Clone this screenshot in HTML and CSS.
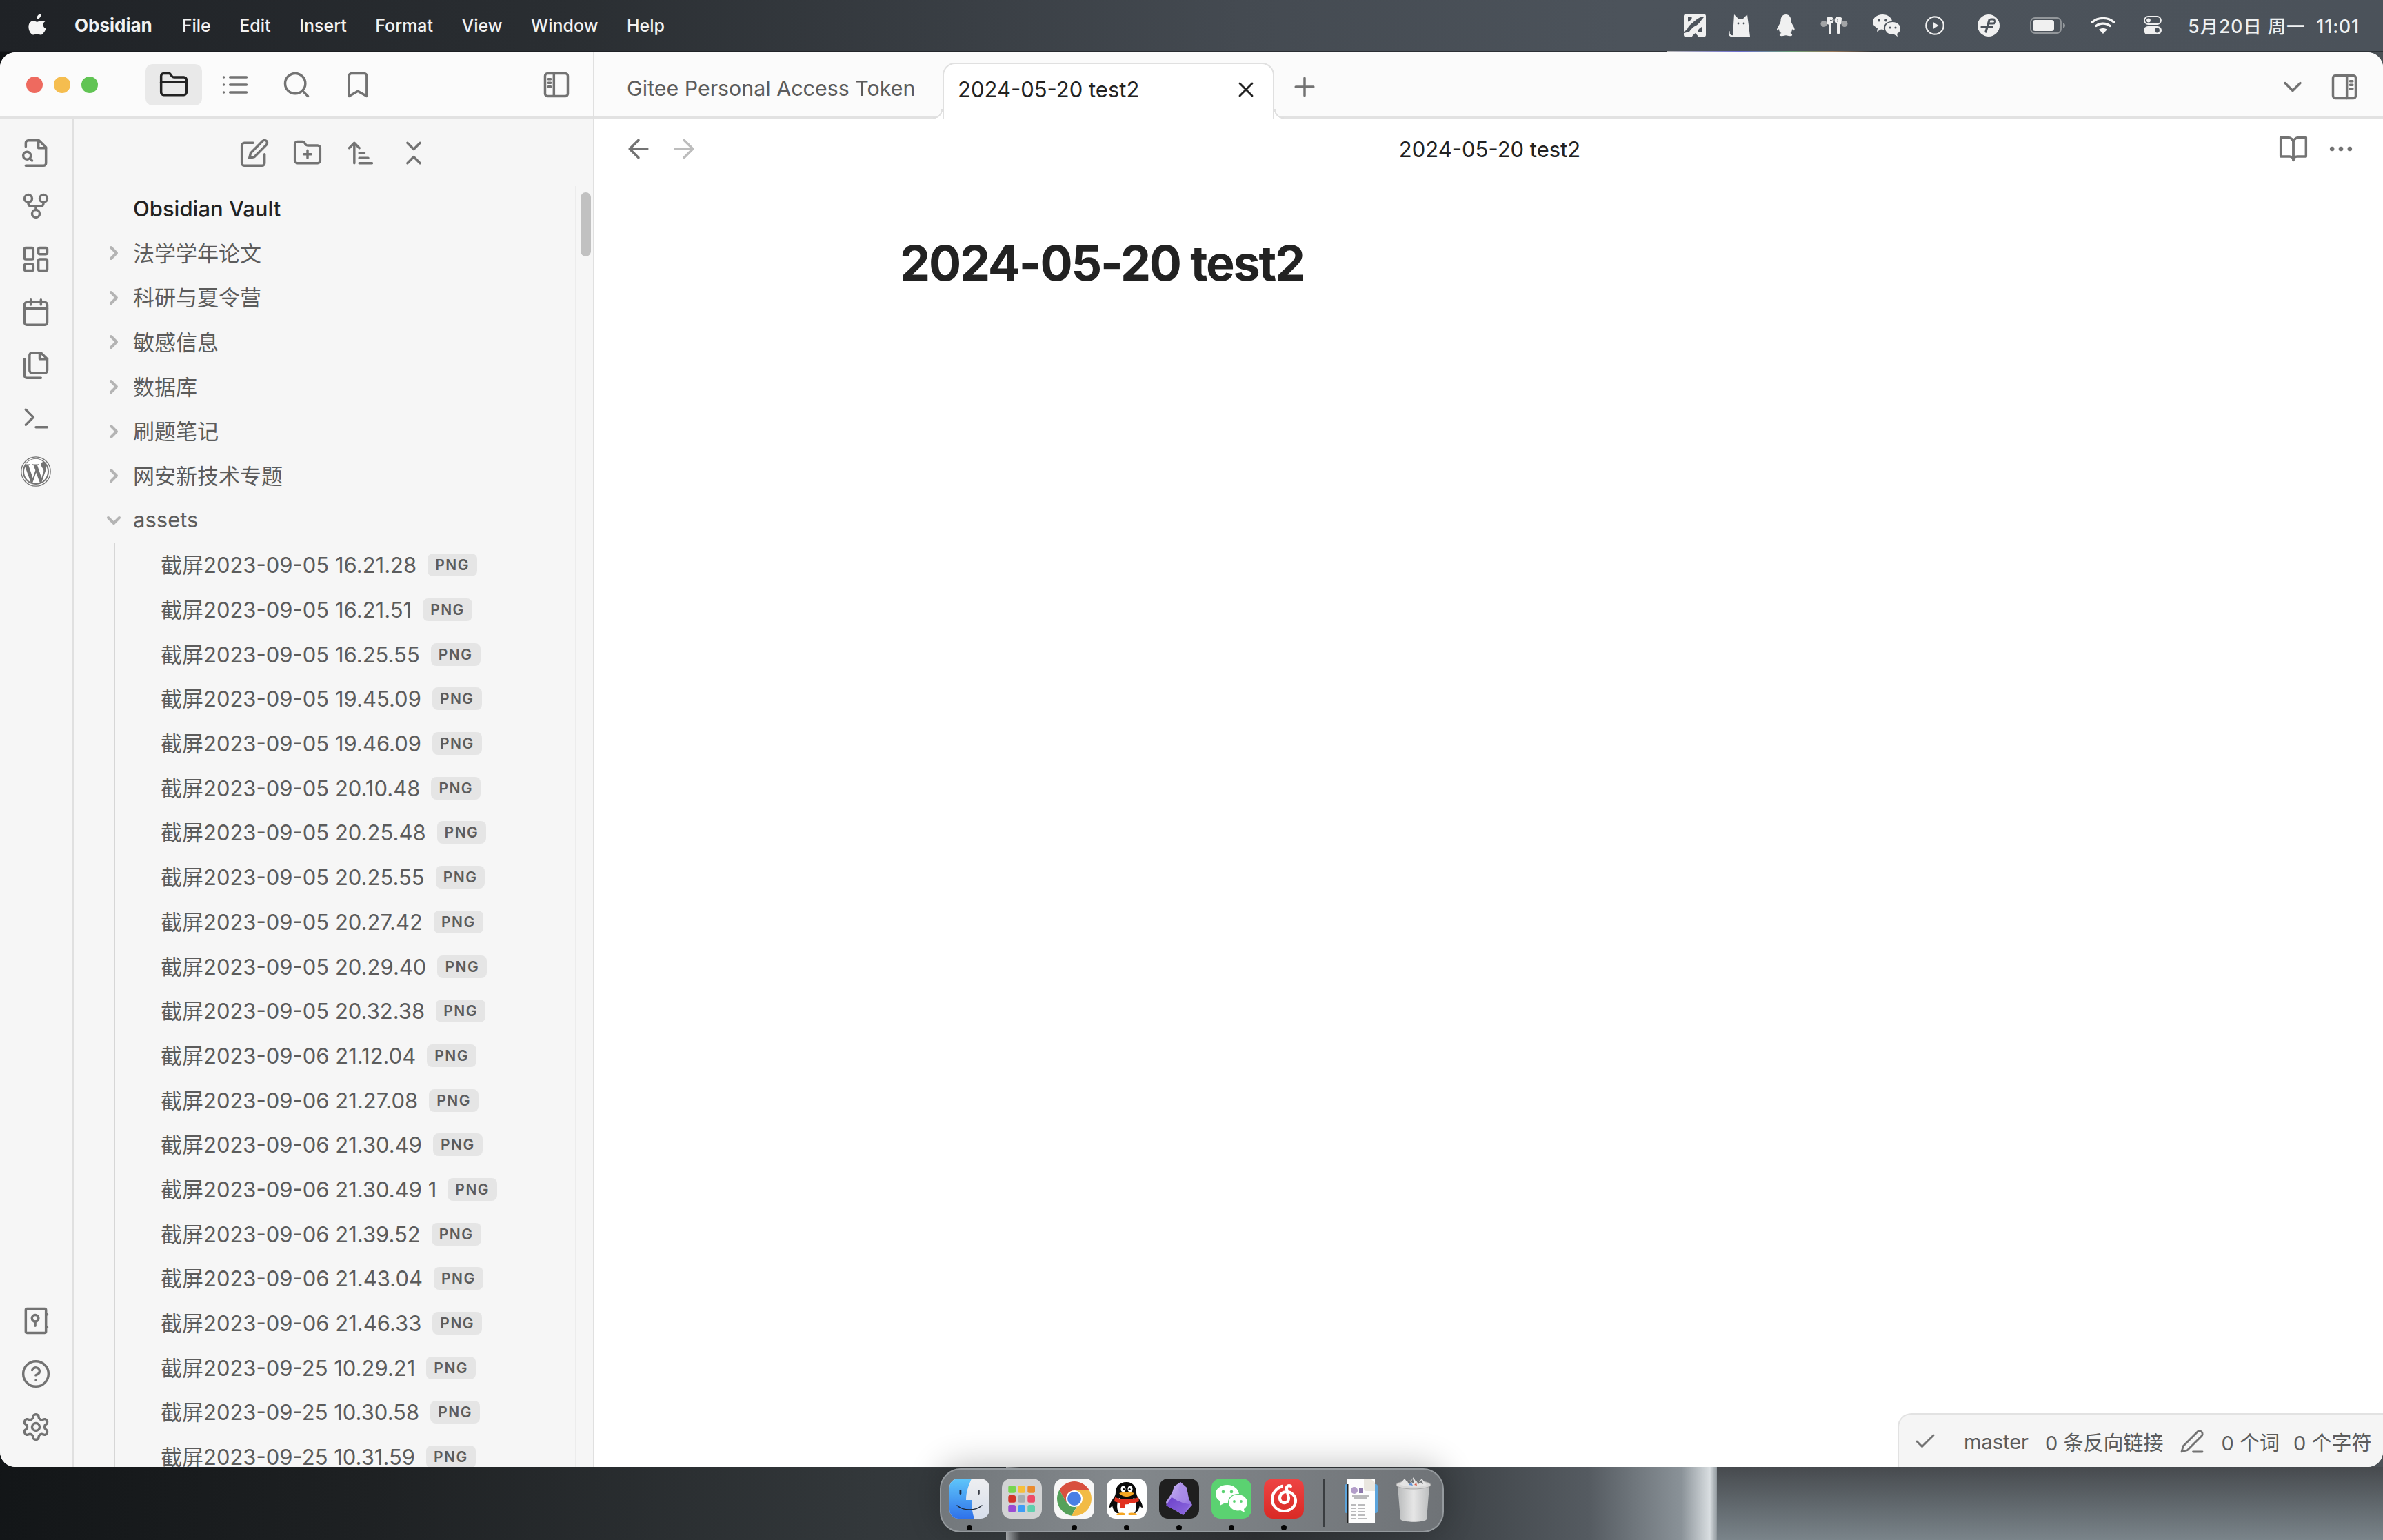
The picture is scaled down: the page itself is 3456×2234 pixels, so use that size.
FILE: index.html
```html
<!DOCTYPE html>
<html lang="zh-CN">
<head>
<meta charset="utf-8">
<title>Obsidian</title>
<link rel="stylesheet" href="styles.css">
</head>
<body>
<svg class="defs" width="0" height="0" aria-hidden="true">
  <defs>
    <linearGradient id="finderBlue" x1="0" y1="0" x2="0" y2="1"><stop offset="0" stop-color="#5fc6fa"/><stop offset="1" stop-color="#2f72ea"/></linearGradient>
    <linearGradient id="finderLight" x1="0" y1="0" x2="0" y2="1"><stop offset="0" stop-color="#eeeff1"/><stop offset="1" stop-color="#d6deeb"/></linearGradient>
    <linearGradient id="gemTop" x1="0" y1="0" x2="1" y2="1"><stop offset="0" stop-color="#c9b6f2"/><stop offset="1" stop-color="#8a65de"/></linearGradient>
    <linearGradient id="gemLow" x1="0" y1="0" x2="1" y2="1"><stop offset="0" stop-color="#6b3fc9"/><stop offset="1" stop-color="#8f6ce0"/></linearGradient>
    <linearGradient id="neteaseBg" x1="0" y1="0" x2="0" y2="1"><stop offset="0" stop-color="#ee4444"/><stop offset="1" stop-color="#d92a25"/></linearGradient>
    <linearGradient id="trashBody" x1="0" y1="0" x2="1" y2="0"><stop offset="0" stop-color="#b9bbbc"/><stop offset=".5" stop-color="#e6e6e6"/><stop offset="1" stop-color="#bcbebf"/></linearGradient>
  </defs>
</svg>
<div class="screen">
  <header class="menubar">
    <nav class="menu-left">
      <svg class="apple" viewBox="0 0 26 31" width="27" height="31"><path d="M18.2 0c.2 2-.6 3.900-1.700 5.300-1.200 1.400-3 2.500-4.900 2.300-.2-1.900.7-3.900 1.700-5.100C14.500 1.100 16.500.1 18.200 0zM24.300 10.700c-1.800 1.100-3.200 2.800-3.200 5.200 0 2.900 1.900 4.600 4 5.500-.4 1.500-1.300 3.200-2.400 4.900-1.500 2.200-3 4.300-5.200 4.300-2.200 0-2.900-1.300-5.400-1.300-2.500 0-3.300 1.300-5.300 1.300-2.200 0-3.800-2.400-5.200-4.600C-.1 22.400-.9 17.600.9 14.100c1.200-2.300 3.700-3.800 6.100-3.800 2.200 0 3.700 1.400 5.300 1.400 1.600 0 2.800-1.400 5.500-1.400 2 0 4.900.4 6.500.4z" fill="#f5f5f5"/></svg>
      <span class="menu-app">Obsidian</span>
      <span class="menu-item">File</span>
      <span class="menu-item">Edit</span>
      <span class="menu-item">Insert</span>
      <span class="menu-item">Format</span>
      <span class="menu-item">View</span>
      <span class="menu-item">Window</span>
      <span class="menu-item">Help</span>
    </nav>
    <div class="menu-right">
      <div class="tray">
        <svg viewBox="0 0 32 32" width="32" height="32"><rect width="32" height="32" rx="2" fill="#f0f0f0"/><path d="M6 4c3 0 5 0 6 .5-1 3-3 5-6 6zM29 3v1c-3 3-6 9-11 12-5 2-8 6-10 9l-8 2v-2c3-2 5-3 6-6 2-4 5-5 9-9 4-3 7-6 14-7zM26 18v8h-6c0-4 3-6 6-8zM17 27c1 2 3 3 4 5h-9c1-2 3-4 5-5z" fill="#4c535b"/></svg>
        <svg viewBox="0 0 36 34" width="36" height="34"><path d="M9 1l6 6h7l6-6 1 8c1 7 2 16 3 24H9C7 34 2 33.500 1 30c-.5-2 .5-4 2-5 0 2-1 3 .5 5 1 1 2.500 1.500 3.500 1 .6-7 1.400-21 2-30z" fill="#f0f0f0"/><circle cx="15" cy="14" r="1.400" fill="#4c535b"/><circle cx="23" cy="14" r="1.400" fill="#4c535b"/></svg>
        <svg viewBox="0 0 26 32" width="26" height="32"><path d="M13 0c5 0 7.500 4 7.500 9 0 3 2 5 3.500 8 1.500 3 2 5 1.500 6-1 .5-2.500-.5-3.500-2 0 3-1 5-2.500 6 2 .6 3 2 2.500 3.500-2 1.500-5 .5-7.500 0l-1.500-.2-1.500.2c-2.500.5-5.500 1.500-7.500 0-.5-1.500.5-2.900 2.500-3.500C4 26 3 24 3 21c-1 1.500-2.500 2.500-3.500 2C-.5 22 .5 20 2 17c1.500-3 3.500-5 3.500-8C5.500 4 8 0 13 0z" fill="#f0f0f0"/></svg>
        <svg viewBox="0 0 40 26" width="40" height="26"><path d="M9 2c3-2 8-2 10 1 1 3 0 7-3 7v14a1.800 1.800 0 0 1-4 0V11.500c-1 0-2-.5-2.500-1.500z" fill="#f0f0f0"/><path d="M31 2c-3-2-8-2-10 1-1 3 0 7 3 7v14a1.800 1.800 0 0 0 4 0V11.500c1 0 2-.5 2.500-1.500z" fill="#f0f0f0"/><circle cx="5" cy="10.500" r="4.500" fill="#a2a4a6"/><circle cx="35" cy="10.500" r="4.500" fill="#a2a4a6"/><path d="M14 5l2 1.500 1.500-2M24 7l2-.5-1.500-2" stroke="#4c535b" stroke-width="1" fill="none"/></svg>
        <svg viewBox="0 0 40 32" width="40" height="32"><path d="M14 0c8 0 14 5 14 10-8-.5-13 5-12 12-1 0-2.500 0-4-.4L6 25l1-5C3 18 0 15 0 11 0 5 6 0 14 0z" fill="#f0f0f0"/><circle cx="9" cy="8.500" r="1.900" fill="#4c535b"/><circle cx="19" cy="8.500" r="1.900" fill="#4c535b"/><path d="M29 11c6 0 11 4 11 9s-3 7-5 8l1 4-5-3c-7 .5-13-3-13-9s5-9 11-9z" fill="#f0f0f0"/><circle cx="25" cy="19" r="1.600" fill="#4c535b"/><circle cx="33" cy="19" r="1.600" fill="#4c535b"/></svg>
        <svg viewBox="0 0 28 28" width="28" height="28"><circle cx="14" cy="14" r="12.700" fill="none" stroke="#f0f0f0" stroke-width="2.200"/><path d="M11 8.500l8.500 5.500-8.500 5.500z" fill="#f0f0f0"/></svg>
        <svg viewBox="0 0 32 32" width="32" height="32"><circle cx="16" cy="16" r="16" fill="#f0f0f0"/><path d="M19 7h3.500c4 0 4 6 0 6H16" stroke="#4c535b" stroke-width="3" fill="none" stroke-linecap="round"/><path d="M6 18h15M17 8l-5 17" stroke="#4c535b" stroke-width="3.200" stroke-linecap="round"/></svg>
        <svg viewBox="0 0 51 24" width="51" height="24"><rect x="1" y="1" width="44" height="22" rx="6" fill="none" stroke="#93979b" stroke-width="1.800"/><rect x="4" y="4" width="31" height="16" rx="3.500" fill="#f0f0f0"/><path d="M48 8c2 1 3 2.500 3 4s-1 3-3 4z" fill="#93979b"/></svg>
        <svg viewBox="0 0 34 25" width="34" height="25"><path d="M1.500 8C9.500.5 24.500.5 32.500 8" fill="none" stroke="#f5f5f5" stroke-width="3.400" stroke-linecap="round"/><path d="M7 13.500c5.500-4.500 14.500-4.500 20 0" fill="none" stroke="#f5f5f5" stroke-width="3.400" stroke-linecap="round"/><path d="M17 25l-6-6.200c3.500-2.500 8.500-2.500 12 0z" fill="#f5f5f5"/></svg>
        <svg viewBox="0 0 26 27" width="26" height="27"><rect x="1" y="1" width="24" height="11" rx="5.500" fill="none" stroke="#f0f0f0" stroke-width="1.800"/><circle cx="7" cy="6.500" r="2.900" fill="#f0f0f0"/><rect y="15" width="26" height="12" rx="6" fill="#f0f0f0"/><circle cx="19.500" cy="21" r="3.400" fill="#4c535b"/></svg>
      </div>
      <span class="clock">5月20日 周一&nbsp;&nbsp;11:01</span>
    </div>
    <span class="menu-glint"></span>
  </header>

  <div class="window">
    <section class="left">
      <div class="left-top">
        <div class="lights"><i class="light red"></i><i class="light amber"></i><i class="light green"></i></div>
        <div class="panes">
          <span class="pane active"><svg class="ic dark" viewBox="0 0 24 24"><path d="M20 20a2 2 0 0 0 2-2V8a2 2 0 0 0-2-2h-7.900a2 2 0 0 1-1.690-.9L9.600 3.900A2 2 0 0 0 7.930 3H4a2 2 0 0 0-2 2v13a2 2 0 0 0 2 2Z"/><path d="M2 10h20"/></svg></span>
          <span class="pane"><svg class="ic" viewBox="0 0 24 24"><path d="M3 12h.01M3 18h.01M3 6h.01M8 12h13M8 18h13M8 6h13"/></svg></span>
          <span class="pane"><svg class="ic" viewBox="0 0 24 24"><circle cx="11" cy="11" r="8"/><path d="m21 21-4.300-4.300"/></svg></span>
          <span class="pane"><svg class="ic" viewBox="0 0 24 24"><path d="m19 21-7-4-7 4V5a2 2 0 0 1 2-2h10a2 2 0 0 1 2 2v16z"/></svg></span>
        </div>
        <svg class="ic toggle-left" viewBox="0 0 24 24"><rect x="3" y="3" width="18" height="18" rx="2"/><path d="M10 3v18M5.500 7.500h2M5.500 10.500h2M5.500 13.500h2"/></svg>
      </div>
      <div class="left-body">
        <aside class="ribbon">
          <div class="ribbon-group">
            <svg class="ic" viewBox="0 0 24 24"><path d="M4 22h14a2 2 0 0 0 2-2V7.500L14.500 2H6a2 2 0 0 0-2 2v3"/><path d="M14 2v6h6"/><circle cx="5" cy="14" r="3"/><path d="m9 18-1.500-1.500"/></svg>
            <svg class="ic" viewBox="0 0 24 24"><circle cx="12" cy="18" r="3"/><circle cx="6" cy="6" r="3"/><circle cx="18" cy="6" r="3"/><path d="M18 9v1a2 2 0 0 1-2 2H8a2 2 0 0 1-2-2V9M12 12v3"/></svg>
            <svg class="ic" viewBox="0 0 24 24"><rect x="3" y="3" width="7" height="9" rx="1"/><rect x="14" y="3" width="7" height="5" rx="1"/><rect x="14" y="12" width="7" height="9" rx="1"/><rect x="3" y="16" width="7" height="5" rx="1"/></svg>
            <svg class="ic" viewBox="0 0 24 24"><rect x="3" y="4" width="18" height="18" rx="2"/><path d="M16 2v4M8 2v4M3 9h18"/></svg>
            <svg class="ic" viewBox="0 0 24 24"><path d="M9 2h7l5 5v9a2 2 0 0 1-2 2H9a2 2 0 0 1-2-2V4a2 2 0 0 1 2-2z"/><path d="M15 2v5h6"/><path d="M3 7v13a2 2 0 0 0 2 2h11"/></svg>
            <svg class="ic" viewBox="0 0 24 24"><path d="m4 17 6-6-6-6M12 19h9"/></svg>
            <svg class="wp" viewBox="0 0 44 44" width="44" height="44"><circle cx="22" cy="22" r="21.200" fill="none" stroke="#737373" stroke-width="1.200"/><circle cx="22" cy="22" r="19" fill="#737373"/><path d="M5 22c0 7 4 12.500 9.500 15.500L6.500 15.500C5.500 17.500 5 20 5 22zM33 21c0-2-1-3.500-1.800-4.800-1-1.600-1.900-3-1.900-4.600 0-1.800 1.300-3.400 3.200-3.400h.3C29.500 5 26 3.700 22 3.700c-6 0-11.500 3-14.500 7.800h1.200c1.800 0 4.700-.3 4.700-.3 1-.1 1 1.400 0 1.500 0 0-1 .1-2 .2l6.200 18.500 3.700-11.200-2.700-7.300c-.9-.1-1.800-.2-1.800-.2-.9-.1-.8-1.500.1-1.500 0 0 2.800.3 4.500.3 1.800 0 4.700-.3 4.700-.3 1-.1 1 1.400 0 1.500 0 0-1 .1-2 .2l6.200 18.300 1.700-5.700c.8-2.300 1.400-4 1.400-5.400zM22.300 23.400l-5.100 15c1.500.5 3.200.7 4.800.7 2 0 3.900-.3 5.700-1zM37 13.700c.1.600.1 1.200.1 1.800 0 1.800-.3 3.800-1.300 6.300l-5.200 15.100C35.700 33.900 39 28.400 39 22c0-3-.7-5.800-2-8.300z" fill="#fff"/></svg>
          </div>
          <div class="ribbon-group ribbon-bottom">
            <svg class="ic" viewBox="0 0 24 24"><rect x="4" y="2.500" width="16" height="19" rx="1"/><circle cx="11.500" cy="10" r="2.600"/><path d="M11.500 12.600V16M20 7h1M20 17h1"/></svg>
            <svg class="ic" viewBox="0 0 24 24"><circle cx="12" cy="12" r="10"/><path d="M9.090 9a3 3 0 0 1 5.830 1c0 2-3 3-3 3M12 17h.01"/></svg>
            <svg class="ic" viewBox="0 0 24 24"><path d="M12.220 2h-.44a2 2 0 0 0-2 2v.18a2 2 0 0 1-1 1.730l-.43.25a2 2 0 0 1-2 0l-.15-.08a2 2 0 0 0-2.730.73l-.22.38a2 2 0 0 0 .73 2.730l.15.1a2 2 0 0 1 1 1.720v.51a2 2 0 0 1-1 1.740l-.15.09a2 2 0 0 0-.73 2.730l.22.38a2 2 0 0 0 2.730.73l.15-.08a2 2 0 0 1 2 0l.43.25a2 2 0 0 1 1 1.730V20a2 2 0 0 0 2 2h.44a2 2 0 0 0 2-2v-.18a2 2 0 0 1 1-1.730l.43-.25a2 2 0 0 1 2 0l.15.08a2 2 0 0 0 2.730-.73l.22-.39a2 2 0 0 0-.73-2.730l-.15-.08a2 2 0 0 1-1-1.740v-.5a2 2 0 0 1 1-1.740l.15-.09a2 2 0 0 0 .73-2.730l-.22-.38a2 2 0 0 0-2.730-.73l-.15.08a2 2 0 0 1-2 0l-.43-.25a2 2 0 0 1-1-1.730V4a2 2 0 0 0-2-2z"/><circle cx="12" cy="12" r="3"/></svg>
          </div>
        </aside>
        <aside class="sidebar">
          <div class="side-tools">
            <svg class="ic" viewBox="0 0 24 24"><path d="M11 4H4a2 2 0 0 0-2 2v14a2 2 0 0 0 2 2h14a2 2 0 0 0 2-2v-7"/><path d="M18.500 2.500a2.121 2.121 0 0 1 3 3L12 15l-4 1 1-4 9.500-9.500z"/></svg>
            <svg class="ic" viewBox="0 0 24 24"><path d="M12 10v6M9 13h6"/><path d="M20 20a2 2 0 0 0 2-2V8a2 2 0 0 0-2-2h-7.900a2 2 0 0 1-1.690-.9L9.600 3.900A2 2 0 0 0 7.930 3H4a2 2 0 0 0-2 2v13a2 2 0 0 0 2 2Z"/></svg>
            <svg class="ic" viewBox="0 0 24 24"><path d="m3 8 4-4 4 4M7 4v16M11 12h4M11 16h7M11 20h10"/></svg>
            <svg class="ic" viewBox="0 0 24 24"><path d="m7 20 5-5 5 5M7 4l5 5 5-5"/></svg>
          </div>
          <div class="tree-wrap">
            <div class="tree">
              <div class="row vault">Obsidian Vault</div>
              <div class="row folder"><svg class="chev" viewBox="0 0 24 24"><path d="m9 18 6-6-6-6"/></svg>法学学年论文</div>
              <div class="row folder"><svg class="chev" viewBox="0 0 24 24"><path d="m9 18 6-6-6-6"/></svg>科研与夏令营</div>
              <div class="row folder"><svg class="chev" viewBox="0 0 24 24"><path d="m9 18 6-6-6-6"/></svg>敏感信息</div>
              <div class="row folder"><svg class="chev" viewBox="0 0 24 24"><path d="m9 18 6-6-6-6"/></svg>数据库</div>
              <div class="row folder"><svg class="chev" viewBox="0 0 24 24"><path d="m9 18 6-6-6-6"/></svg>刷题笔记</div>
              <div class="row folder"><svg class="chev" viewBox="0 0 24 24"><path d="m9 18 6-6-6-6"/></svg>网安新技术专题</div>
              <div class="row folder"><svg class="chev" viewBox="0 0 24 24"><path d="m6 9 6 6 6-6"/></svg>assets</div>
              <div class="children">
                <div class="row file">截屏2023-09-05 16.21.28<span class="badge">PNG</span></div>
                <div class="row file">截屏2023-09-05 16.21.51<span class="badge">PNG</span></div>
                <div class="row file">截屏2023-09-05 16.25.55<span class="badge">PNG</span></div>
                <div class="row file">截屏2023-09-05 19.45.09<span class="badge">PNG</span></div>
                <div class="row file">截屏2023-09-05 19.46.09<span class="badge">PNG</span></div>
                <div class="row file">截屏2023-09-05 20.10.48<span class="badge">PNG</span></div>
                <div class="row file">截屏2023-09-05 20.25.48<span class="badge">PNG</span></div>
                <div class="row file">截屏2023-09-05 20.25.55<span class="badge">PNG</span></div>
                <div class="row file">截屏2023-09-05 20.27.42<span class="badge">PNG</span></div>
                <div class="row file">截屏2023-09-05 20.29.40<span class="badge">PNG</span></div>
                <div class="row file">截屏2023-09-05 20.32.38<span class="badge">PNG</span></div>
                <div class="row file">截屏2023-09-06 21.12.04<span class="badge">PNG</span></div>
                <div class="row file">截屏2023-09-06 21.27.08<span class="badge">PNG</span></div>
                <div class="row file">截屏2023-09-06 21.30.49<span class="badge">PNG</span></div>
                <div class="row file">截屏2023-09-06 21.30.49 1<span class="badge">PNG</span></div>
                <div class="row file">截屏2023-09-06 21.39.52<span class="badge">PNG</span></div>
                <div class="row file">截屏2023-09-06 21.43.04<span class="badge">PNG</span></div>
                <div class="row file">截屏2023-09-06 21.46.33<span class="badge">PNG</span></div>
                <div class="row file">截屏2023-09-25 10.29.21<span class="badge">PNG</span></div>
                <div class="row file">截屏2023-09-25 10.30.58<span class="badge">PNG</span></div>
                <div class="row file">截屏2023-09-25 10.31.59<span class="badge">PNG</span></div>
              </div>
            </div>
            <div class="track"><div class="thumb"></div></div>
          </div>
        </aside>
      </div>
    </section>

    <main class="main">
      <div class="tabbar">
        <div class="tab">Gitee Personal Access Token</div>
        <div class="tab current"><span>2024-05-20 test2</span><svg class="ic dark small" viewBox="0 0 24 24"><path d="M18 6 6 18M6 6l12 12"/></svg></div>
        <svg class="ic new-tab" viewBox="0 0 24 24"><path d="M5 12h14M12 5v14"/></svg>
        <div class="tab-right">
          <svg class="ic" viewBox="0 0 24 24"><path d="m6 9 6 6 6-6"/></svg>
          <svg class="ic" viewBox="0 0 24 24"><rect x="3" y="3" width="18" height="18" rx="2"/><path d="M14 3v18M16.500 7.500h2M16.500 10.500h2M16.500 13.500h2"/></svg>
        </div>
      </div>
      <div class="view-head">
        <div class="nav-arrows">
          <svg class="ic" viewBox="0 0 24 24"><path d="m12 19-7-7 7-7M19 12H5"/></svg>
          <svg class="ic faded" viewBox="0 0 24 24"><path d="M5 12h14M12 5l7 7-7 7"/></svg>
        </div>
        <div class="view-title">2024-05-20 test2</div>
        <div class="view-actions">
          <svg class="ic" viewBox="0 0 24 24"><path d="M2 3h6a4 4 0 0 1 4 4v14a3 3 0 0 0-3-3H2z"/><path d="M22 3h-6a4 4 0 0 0-4 4v14a3 3 0 0 1 3-3h7z"/></svg>
          <svg class="ic solid" viewBox="0 0 24 24"><circle cx="5" cy="12" r="1.800"/><circle cx="12" cy="12" r="1.800"/><circle cx="19" cy="12" r="1.800"/></svg>
        </div>
      </div>
      <article class="note"><h1>2024-05-20 test2</h1></article>
    </main>

    <footer class="status">
      <svg class="ic st-check" viewBox="0 0 24 24"><path d="M20 6 9 17l-5-5"/></svg>
      <span class="st-master">master</span>
      <span class="st-links">0 条反向链接</span>
      <svg class="ic st-pen" viewBox="0 0 24 24"><path d="M17 3a2.850 2.850 0 1 1 4 4L7.500 20.500 2 22l1.500-5.500Z"/><path d="M13 22h9"/></svg>
      <span class="st-words">0 个词</span>
      <span class="st-chars">0 个字符</span>
    </footer>
  </div>

  <div class="stand"></div>

  <div class="dock">
    <div class="dock-item on">
      <svg viewBox="0 0 58 58" width="58" height="58"><rect width="58" height="58" rx="13" fill="url(#finderLight)"/><path d="M13 0h19c-4 9-8 19-8 31h8c0 10 1 19 4 27H13A13 13 0 0 1 0 45V13A13 13 0 0 1 13 0z" fill="url(#finderBlue)"/><rect x="14.500" y="16" width="2.800" height="7" rx="1.400" fill="#1c2b44"/><rect x="41" y="16" width="2.800" height="7" rx="1.400" fill="#3a3f49"/><path d="M11 39c10 8 26 8 36 0" fill="none" stroke="#1d2531" stroke-width="1.500" stroke-linecap="round"/></svg>
    </div>
    <div class="dock-item">
      <svg viewBox="0 0 58 58" width="58" height="58"><rect width="58" height="58" rx="13" fill="#d2d3d4"/><rect x="9.300" y="10" width="10.700" height="10.700" rx="2.500" fill="#76d650"/><rect x="23.300" y="10" width="10.700" height="10.700" rx="2.500" fill="#f6bf3b"/><rect x="37.300" y="10" width="10.700" height="10.700" rx="2.500" fill="#ea8b2e"/><rect x="9.300" y="24" width="10.700" height="10.700" rx="2.500" fill="#d4352a"/><rect x="23.300" y="24" width="10.700" height="10.700" rx="2.500" fill="#a6adb0"/><rect x="37.300" y="24" width="10.700" height="10.700" rx="2.500" fill="#ee4b68"/><rect x="9.300" y="38" width="10.700" height="10.700" rx="2.500" fill="#9b4cd3"/><rect x="23.300" y="38" width="10.700" height="10.700" rx="2.500" fill="#3e9df6"/><rect x="37.300" y="38" width="10.700" height="10.700" rx="2.500" fill="#60cfae"/></svg>
    </div>
    <div class="dock-item on">
      <svg viewBox="0 0 58 58" width="58" height="58"><rect width="58" height="58" rx="13" fill="#f7f7f7"/><path d="M7.400 16.500a25 25 0 0 1 43.200 0H29L18 35z" fill="#d8503f"/><path d="M7.400 16.500A25 25 0 0 0 25 53.700L36 35H18z" fill="#55a15a"/><path d="M50.600 16.500A25 25 0 0 1 25 53.700L40 29 29 16.500z" fill="#f2bb45"/><circle cx="29" cy="29" r="12" fill="#fff"/><circle cx="29" cy="29" r="10" fill="#4a7fe5"/></svg>
    </div>
    <div class="dock-item on">
      <svg viewBox="0 0 58 58" width="58" height="58"><rect width="58" height="58" rx="13" fill="#fff"/><path d="M29 5c9 0 14 7 14 15 0 3 1 5 3 8 3 4 6 9 6 13 0 2-2 1-4-2-1 5-3 9-7 11H15c-4-2-6-6-7-11-2 3-4 4-4 2 0-4 3-9 6-13 2-3 3-5 3-8 0-8 5-15 16-15z" fill="#0a0a0a"/><path d="M18 28c6 3 16 3 22 0 3 6 4 14 1 21-3 3-21 3-24 0-3-7-2-15 1-21z" fill="#fff"/><ellipse cx="24" cy="15" rx="3.500" ry="4.300" fill="#fff"/><ellipse cx="34" cy="15" rx="3.500" ry="4.300" fill="#fff"/><circle cx="24.800" cy="15.500" r="1.600" fill="#000"/><circle cx="33.200" cy="15.500" r="1.600" fill="#000"/><path d="M18 21c6-2 16-2 22 0-3 4-8 5-11 5s-8-1-11-5z" fill="#f5a623"/><path d="M12 27c10 4 24 4 34 0l1 6c-5 2-10 3-14 3v1l-8 .5V36c-4 0-8-1-14-3z" fill="#e1301e"/><path d="M19 34h8v9h-8z" fill="#e1301e"/><path d="M14 52c2-3 10-3 13-1l-1 2H15zM44 52c-2-3-10-3-13-1l1 2h11z" fill="#f5a623"/></svg>
    </div>
    <div class="dock-item on">
      <svg viewBox="0 0 58 58" width="58" height="58"><rect width="58" height="58" rx="13" fill="#1f1f1f"/><path d="M31 5l9 8 3 16 5 9-13 15-10-6-14-8-1-5 9-14 3-9z" fill="url(#gemTop)"/><path d="M18 27l-8 12 14 7 11 7 10-16c-7-1-10-1-15-4-5-1-7-4-12-6z" fill="url(#gemLow)"/><path d="M31 5l-3 11 8 18 7-5-3-16z" fill="#a98ae8" opacity=".6"/></svg>
    </div>
    <div class="dock-item on">
      <svg viewBox="0 0 58 58" width="58" height="58"><rect width="58" height="58" rx="13" fill="#5bd271"/><path d="M23 9c9 0 16 6 17 13-9-1-17 5-16 14-1 .2-3 0-5-.5L12 39l1-6C8 30 6 26 6 22 6 15 13 9 23 9z" fill="#fff"/><circle cx="17" cy="19" r="2.300" fill="#5bd271"/><circle cx="29" cy="19" r="2.300" fill="#5bd271"/><path d="M38 23c8 0 14 5 14 12 0 4-2 7-5 9l1 5-6-3c-9 2-17-4-17-11 0-7 6-12 13-12z" fill="#fff"/><circle cx="33" cy="33" r="1.900" fill="#5bd271"/><circle cx="43" cy="33" r="1.900" fill="#5bd271"/></svg>
    </div>
    <div class="dock-item on">
      <svg viewBox="0 0 58 58" width="58" height="58"><rect width="58" height="58" rx="13" fill="url(#neteaseBg)"/><path d="M26 11c-8 3-14 10-14 19 0 9 7 17 17 17s17-7 17-15c0-7-6-13-13-13-6 0-10 4-10 9 0 5 4 8 8 7 4-1 5-4 5-7l-3-13c-1-4 3-6 6-4" fill="none" stroke="#fff" stroke-width="4.200" stroke-linecap="round"/></svg>
    </div>
    <span class="dock-sep"></span>
    <div class="dock-item doc">
      <svg viewBox="0 0 48 64" width="48" height="64"><rect x="0" y="8" width="48" height="42" rx="3" fill="#5ba4dc"/><rect x="4" y="1" width="40" height="63" fill="#fdfdfd"/><rect x="4" y="8" width="1.500" height="56" fill="#222"/><path d="M28 0h10l6 6v12H32c-3 0-4-2-4-4z" fill="#e9e6df"/><circle cx="14" cy="17" r="5" fill="#b29cc9"/><rect x="21" y="13" width="6" height="8" fill="#8d79ad"/><path d="M11 25h24M13 28h20M9 38h8M9 43h8M9 48h8M9 53h8M9 58h8M19 38h10M19 43h10M19 48h10M19 53h10M19 58h14" stroke="#55565a" stroke-width=".8"/></svg>
    </div>
    <div class="dock-item trash">
      <svg viewBox="0 0 52 66" width="52" height="66"><path d="M3 13c4 3 42 3 46 0l-4 49c-3 5-35 5-38 0z" fill="url(#trashBody)"/><ellipse cx="26" cy="12" rx="25" ry="6" fill="#d8d8d8" stroke="#a8a8a8" stroke-width="1"/><path d="M6 11l7-8 6 8 7-10 5 10 7-8 7 9c-8 4-30 4-39-1z" fill="#e4e4e4"/><path d="M16 5l4 7 5-9 2 7zM29 4l4 7 5-6 2 6z" fill="#6d7073"/><path d="M19 12l4-3 2 4z" fill="#5b8fd8"/><path d="M27 12l3-3 1 4z" fill="#d6604f"/></svg>
    </div>
  </div>
</div>
</body>
</html>
```

FILE: styles.css
```css
* { box-sizing: border-box; }
html, body { margin: 0; padding: 0; }
body { width: 3456px; height: 2234px; overflow: hidden; font-family: Inter, "Noto Sans CJK SC", sans-serif; color: #5c5c5c; }
.defs { position: absolute; }

.screen {
  position: relative;
  width: 3456px;
  height: 2234px;
  display: flex;
  flex-direction: column;
  overflow: hidden;
  background:
    linear-gradient(to bottom, #464a4e 0%, #7a848a 100%) right bottom / 966px 106px no-repeat,
    linear-gradient(95deg, #0f1214 0%, #1e2123 20%, #33383b 40%, #3f4448 60%, #4c5257 100%);
}

/* menu bar */
.menubar {
  position: relative;
  height: 76px;
  flex: none;
  display: flex;
  justify-content: space-between;
  align-items: center;
  padding-bottom: 3px;
  background: linear-gradient(90deg, #1f2226 0%, #2a2e32 24%, #444a51 52%, #4c535b 68%, #4b525a 100%);
  box-shadow: inset 0 -2px 0 rgba(20,22,25,.55);
  color: #f2f2f2;
  font-size: 25px;
}
.menu-left { display: flex; align-items: center; padding-left: 41px; }
.apple { margin-right: 40px; margin-top: -2px; }
.menu-app { font-size: 26px; font-weight: 700; margin-right: 43px; }
.menu-item { margin-right: 41.500px; font-weight: 500; }
.menu-right { display: flex; align-items: center; padding-right: 34px; }
.tray {
  display: grid;
  grid-template-columns: 64px 68px 64px 75px 78px 62px 94px 77px 84px 60px;
  justify-items: center;
  align-items: center;
}
.clock { margin-left: 21px; font-size: 26.5px; font-weight: 500; letter-spacing: .9px; color: #eef0f1; white-space: nowrap; }
.menu-glint {
  position: absolute;
  left: 2418px;
  bottom: 0;
  width: 300px;
  height: 2px;
  background: linear-gradient(90deg, #b8b8b8 0%, #6d6fd0 35%, #6ea37a 60%, #9b7b5c 80%, rgba(90,90,90,0) 100%);
}

/* window */
.window {
  position: relative;
  flex: none;
  height: 2052px;
  display: flex;
  border-radius: 22px;
  overflow: hidden;
  background: #fff;
}
.left { width: 862px; flex: none; display: flex; flex-direction: column; border-right: 2px solid #e0e0e0; }
.left-top {
  height: 96px;
  flex: none;
  display: flex;
  align-items: center;
  background: #fbfbfb;
  border-bottom: 3px solid #e2e2e2;
  padding-left: 38px;
  padding-right: 31px;
}
.lights { display: flex; gap: 16px; width: 173px; flex: none; }
.light { width: 24px; height: 24px; border-radius: 50%; display: block; }
.red { background: #ee6a5f; }
.amber { background: #f5bd4f; }
.green { background: #61c454; }
.panes { display: flex; gap: 7px; }
.pane { width: 82px; height: 60px; display: flex; align-items: center; justify-content: center; border-radius: 10px; }
.pane.active { background: #e9e9e9; }
.toggle-left { margin-left: auto; }

.ic { width: 44px; height: 44px; flex: none; fill: none; stroke: #737373; stroke-width: 1.900; stroke-linecap: round; stroke-linejoin: round; display: block; }
.ic.dark { stroke: #222; }
.ic.small { width: 36px; height: 36px; }
.ic.faded { stroke: #bdbdbd; }
.ic.solid { fill: #737373; stroke: none; }
.left-body { flex: 1; display: flex; min-height: 0; background: #f6f6f6; }

.ribbon {
  width: 107px;
  flex: none;
  border-right: 2px solid #e0e0e0;
  display: flex;
  flex-direction: column;
  justify-content: space-between;
  align-items: center;
  padding: 28px 2px 36px 0;
}
.ribbon-group { display: flex; flex-direction: column; gap: 33px; }
.wp { display: block; }

.sidebar { flex: 1; min-width: 0; display: flex; flex-direction: column; }
.side-tools { height: 98px; flex: none; display: flex; justify-content: center; align-items: center; gap: 33px; padding: 2px 0 0 2px; }
.tree-wrap { flex: 1; min-height: 0; display: flex; }
.tree { flex: 1; min-width: 0; overflow: hidden; padding-left: 86px; }
.track { width: 26px; flex: none; border-left: 2px solid #ececec; padding: 9px 0 0 6px; }
.thumb { width: 15px; height: 93px; border-radius: 8px; background: #c1c1c1; }

.row { position: relative; height: 64.7px; display: flex; align-items: center; font-size: 31px; white-space: nowrap; color: #5c5c5c; }
.folder, .file { padding-bottom: 4px; }
.vault { color: #222; font-weight: 500; }
.chev {
  position: absolute;
  left: -44px;
  width: 32px;
  height: 32px;
  margin-top: 4px;
  fill: none;
  stroke: #b4b4b4;
  stroke-width: 3;
  stroke-linecap: round;
  stroke-linejoin: round;
}
.children { margin-left: -28px; border-left: 2px solid #d6d6d6; padding-left: 66px; }
.badge {
  margin: 4px 0 0 16px;
  height: 33px;
  padding: 0 11px;
  display: inline-flex;
  align-items: center;
  border-radius: 8px;
  background: #e5e5e5;
  font-size: 21px;
  font-weight: 600;
  letter-spacing: 1.500px;
}

/* main */
.main { flex: 1; min-width: 0; display: flex; flex-direction: column; }
.tabbar {
  position: relative;
  height: 96px;
  flex: none;
  display: flex;
  align-items: flex-end;
  background: #fbfbfb;
  border-bottom: 3px solid #e2e2e2;
}
.tab { height: 81px; display: flex; align-items: center; font-size: 30.4px; color: #5c5c5c; padding-bottom: 2px; }
.tab:first-child { width: 505px; padding-left: 47px; flex: none; }
.tab.current {
  position: relative;
  width: 481px;
  height: 81px;
  margin-bottom: -3px;
  flex: none;
  justify-content: space-between;
  padding: 0 21px 6px 20px;
  background: #fff;
  color: #222;
  font-size: 31px;
  border: 2px solid #e0e0e0;
  border-bottom: 0;
  border-radius: 18px 18px 0 0;
}
.tab.current::before, .tab.current::after {
  content: "";
  position: absolute;
  bottom: 0;
  width: 14px;
  height: 14px;
}
.tab.current::before { left: -16px; background: radial-gradient(circle at 0 0, transparent 12px, #e0e0e0 12.500px, #e0e0e0 14px, #fff 14.500px); }
.tab.current::after { right: -16px; background: radial-gradient(circle at 100% 0, transparent 12px, #e0e0e0 12.500px, #e0e0e0 14px, #fff 14.500px); }
.new-tab { margin: 0 0 21px 22px; }
.tab-right { margin-left: auto; display: flex; gap: 31px; align-items: center; padding: 0 34px 21px 0; }

.view-head { height: 88px; flex: none; display: grid; grid-template-columns: 1fr auto 1fr; align-items: center; padding: 0 39px 0 42px; }
.nav-arrows { display: flex; gap: 22px; }
.view-title { font-size: 31px; color: #222; font-weight: 400; }
.view-actions { display: flex; justify-content: flex-end; gap: 25px; }
.note { padding: 80px 0 0 443px; }
.note h1 { margin: 0; font-size: 70px; line-height: 84px; font-weight: 700; letter-spacing: -2.200px; color: #222; }

/* status bar */
.status {
  position: absolute;
  right: 0;
  bottom: 0;
  left: 2752px;
  height: 78px;
  padding-top: 2px;
  display: flex;
  align-items: center;
  background: #f5f5f5;
  border: 2px solid #e2e2e2;
  border-width: 2px 0 0 2px;
  border-top-left-radius: 20px;
  font-size: 29px;
  color: #5c5c5c;
  white-space: nowrap;
}
.st-check { width: 36px; height: 36px; margin-left: 20px; }
.st-master { margin-left: 38px; }
.st-links { margin-left: 24px; }
.st-pen { width: 36px; height: 36px; margin-left: 24px; }
.st-words { margin-left: 24px; }
.st-chars { margin-left: 20px; }

/* wallpaper stand */
.stand {
  position: absolute;
  left: 1459px;
  top: 2128px;
  width: 1031px;
  height: 106px;
  background: linear-gradient(90deg, #aeb2b5 0, #3f4245 2%, #2f3235 35%, #3b4044 60%, #555b61 82%, #8a9298 95%, #d9dee1 99%, #8f979c 100%);
}

/* dock */
.dock {
  position: absolute;
  left: 1363px;
  top: 2130px;
  width: 731px;
  height: 93px;
  display: flex;
  align-items: flex-start;
  padding: 13px 0 0 12px;
  gap: 18px;
  border-radius: 30px;
  border: 2px solid rgba(160,166,170,.75);
  background: linear-gradient(100deg, #72777b 0%, #83888c 35%, #6f7377 100%);
  box-shadow: 0 -6px 48px rgba(0,0,0,.24);
}
.dock-item { position: relative; width: 58px; height: 58px; flex: none; }
.dock-item svg { display: block; }
.dock-item.on::after {
  content: "";
  position: absolute;
  left: 25px;
  top: 67px;
  width: 8px;
  height: 8px;
  border-radius: 50%;
  background: #050505;
}
.dock-sep { width: 2px; height: 70px; flex: none; background: #3a3d40; margin: 0 0 0 10px; }
.doc { width: 48px; margin-left: 11px; }
.trash { width: 52px; margin-left: 8px; margin-top: -3px; }
```
